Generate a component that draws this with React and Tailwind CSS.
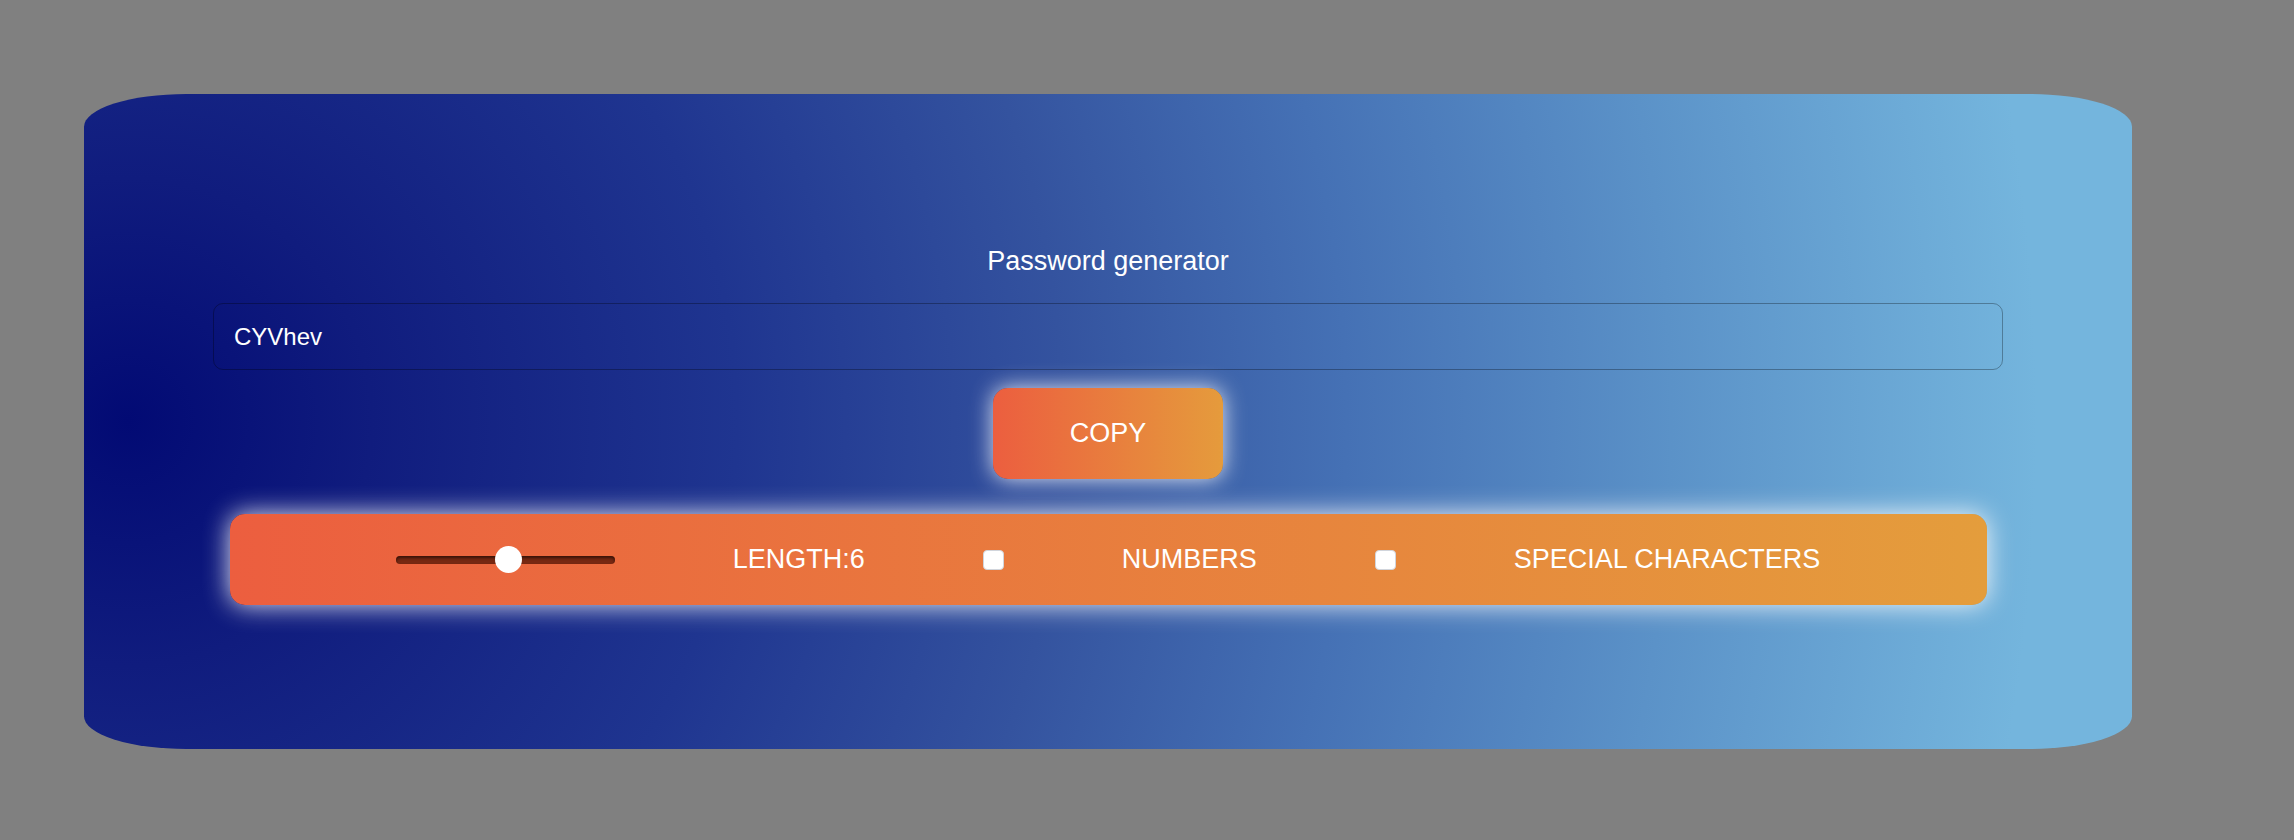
import { useState } from "react";

export default function App() {
  const [length, setLength] = useState(6);
  const [numbers, setNumbers] = useState(false);
  const [special, setSpecial] = useState(false);
  const password = "CYVhev";

  return (
    <div className="min-h-screen bg-[#808080] pt-[94px] font-['Liberation_Sans',Arial,sans-serif] text-white">
      <div className="ml-[84px] w-[2048px] h-[655px] rounded-[5%] bg-[radial-gradient(circle_at_44px_50%,#020a74_0%,#101c7e_12%,#1f3590_30%,#34539f_46%,#4571b5_60%,#5b92c8_76%,#74b5dd_94%)] pt-[152px] flex flex-col items-center">
        <h1 className="text-[27px] leading-[31px] font-normal">Password generator</h1>

        {/* output */}
        <input
          type="text"
          readOnly
          value={password}
          className="mt-[26px] w-[1790px] h-[67px] rounded-[10px] border-[1.5px] border-black/30 bg-transparent px-[20px] text-[24px] text-white outline-none"
        />

        <button className="mt-[18px] w-[230px] h-[91px] rounded-[15px] bg-[linear-gradient(to_right,#ec5e3f,#e59b3c)] text-[27px] text-white shadow-[0_0_22px_rgba(255,255,255,0.85)]">
          COPY
        </button>

        {/* options */}
        <div className="mt-[35px] w-[1757px] h-[91px] rounded-[15px] bg-[linear-gradient(to_right,#ec5e3f,#e49d3c)] shadow-[0_0_26px_rgba(255,255,255,0.9)] flex items-center justify-center gap-[118px]">
          <input
            type="range"
            min={0}
            max={11.6}
            step={1}
            value={length}
            onChange={(e) => setLength(Number(e.target.value))}
            className="appearance-none w-[219px] h-[8px] rounded-full bg-[#772812] shadow-[inset_0_2px_3px_rgba(0,0,0,0.55)] outline-none [&::-webkit-slider-thumb]:appearance-none [&::-webkit-slider-thumb]:w-[27px] [&::-webkit-slider-thumb]:h-[27px] [&::-webkit-slider-thumb]:rounded-full [&::-webkit-slider-thumb]:bg-white"
          />
          <span className="text-[27px]">LENGTH:{length}</span>
          <input
            type="checkbox"
            checked={numbers}
            onChange={() => setNumbers(!numbers)}
            className="appearance-none w-[21px] h-[20px] rounded-[4px] bg-white border border-gray-300"
          />
          <span className="text-[27px]">NUMBERS</span>
          <input
            type="checkbox"
            checked={special}
            onChange={() => setSpecial(!special)}
            className="appearance-none w-[21px] h-[20px] rounded-[4px] bg-white border border-gray-300"
          />
          <span className="text-[27px]">SPECIAL CHARACTERS</span>
        </div>
      </div>
    </div>
  );
}
